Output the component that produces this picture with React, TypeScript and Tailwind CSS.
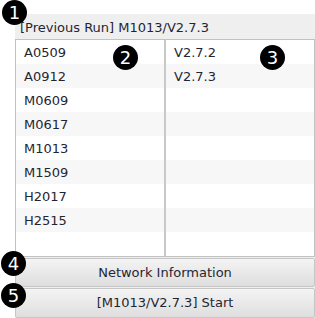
const models = ["A0509", "A0912", "M0609", "M0617", "M1013", "M1509", "H2017", "H2515"];
const versions = ["V2.7.2", "V2.7.3"];

function Badge({ n, className }: { n: number; className: string }) {
  return (
    <span
      className={`absolute flex h-[25px] w-[25px] items-center justify-center rounded-full bg-black text-[18px] leading-none text-white ${className}`}
    >
      {n}
    </span>
  );
}

export default function App() {
  return (
    <div className="relative h-[318px] w-[315px] overflow-hidden bg-white font-['DejaVu_Sans',sans-serif] text-[13px] text-[#1f2633]">
      <div className="ml-[15px] mt-[14px] flex h-[304px] flex-col bg-[#efefef]">
        <div className="flex h-[25px] items-center px-[5px] pt-[2px]">[Previous Run] M1013/V2.7.3</div>

        <div className="grid h-[219px] grid-cols-[150px_1fr] border border-[#c2c2c2] bg-white">
          <ul className="border-r-2 border-[#c8c8c8]">
            {models.map((m, i) => (
              <li
                key={m}
                className={`flex h-[24px] items-center pl-[8px] pt-[1px] ${i % 2 ? "bg-[#f7f7f7]" : "bg-white"}`}
              >
                {m}
              </li>
            ))}
          </ul>
          <ul>
            {models.map((_, i) => (
              <li
                key={i}
                className={`flex h-[24px] items-center pl-[8px] pt-[1px] ${i % 2 ? "bg-[#f7f7f7]" : "bg-white"}`}
              >
                {versions[i] ?? ""}
              </li>
            ))}
          </ul>
        </div>

        <button className="mt-[1px] h-[29px] w-full rounded-[2px] border border-[#c6c6c6] bg-gradient-to-b from-[#f4f4f4] to-[#dedede] text-[#1f2633]">
          Network Information
        </button>
        <button className="mt-[1px] h-[30px] w-full rounded-[2px] border border-[#c6c6c6] bg-gradient-to-b from-[#f4f4f4] to-[#dedede] text-[#1f2633]">
          [M1013/V2.7.3] Start
        </button>
      </div>

      <Badge n={1} className="left-[2px] top-[0px]" />
      <Badge n={2} className="left-[113px] top-[45px]" />
      <Badge n={3} className="left-[260px] top-[45px]" />
      <Badge n={4} className="left-[1px] top-[251px]" />
      <Badge n={5} className="left-[1px] top-[283px]" />
    </div>
  );
}
